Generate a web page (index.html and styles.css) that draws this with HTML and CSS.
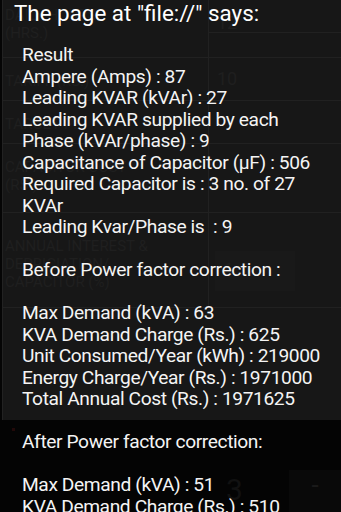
FILE: index.html
```html
<!DOCTYPE html>
<html lang="en">
<head>
  <meta charset="UTF-8">
  <title>Power Factor Correction</title>
  <link rel="stylesheet" href="styles.css">
</head>
<body>
  <div class="page">
    <div class="ghost-table">
      <div class="row row-hours">
        <div class="cell label">DAILY HOURS<br>(Hrs.)</div>
        <div class="cell value"><span>12</span></div>
      </div>
      <div class="row row-short">
        <div class="cell label">TARIFF (Rs.)</div>
        <div class="cell value"><span>10</span></div>
      </div>
      <div class="row row-short">
        <div class="cell label">TARGET PF</div>
        <div class="cell value"></div>
      </div>
      <div class="row row-cap">
        <div class="cell label">CAPACITOR COST<br>(Rs.)</div>
        <div class="cell value"></div>
      </div>
      <div class="row row-interest">
        <div class="cell label">ANNUAL INTEREST &amp;<br>DEPRICIATION/<br>CAPACITOR (%)</div>
        <div class="cell value"><span class="box">6</span></div>
      </div>
    </div>
    <div class="lower">
      <span class="dot"></span>
      <span class="digit">3</span>
      <span class="minus">-</span>
    </div>
  </div>

  <div class="dialog">
    <div class="dialog-title">The page at "file://" says:</div>
    <div class="dialog-message">Result
Ampere (Amps) : 87
Leading KVAR (kVAr) : 27
Leading KVAR supplied by each Phase (kVAr/phase) : 9
Capacitance of Capacitor (μF) : 506
Required Capacitor is : 3 no. of 27 KVAr
Leading Kvar/Phase is  : 9

Before Power factor correction :

Max Demand (kVA) : 63
KVA Demand Charge (Rs.) : 625
Unit Consumed/Year (kWh) : 219000
Energy Charge/Year (Rs.) : 1971000
Total Annual Cost (Rs.) : 1971625

After Power factor correction:

Max Demand (kVA) : 51
KVA Demand Charge (Rs.) : 510
Unit Consumed/Year (kWh) : 219000</div>
  </div>
</body>
</html>
```

FILE: styles.css
```css
html, body {
  margin: 0;
  padding: 0;
}
body {
  width: 341px;
  height: 512px;
  overflow: hidden;
  position: relative;
  background: #050505;
  font-family: Roboto, "Noto Sans", sans-serif;
  color: #f4f4f4;
}

/* the page behind the dialog, almost hidden by the dim */
.page {
  display: flex;
  flex-direction: column;
  height: 512px;
}
.ghost-table {
  height: 420px;
  background: #171717;
  border-left: 1px solid #222;
  margin-left: 2px;
  color: #1f1f1f;
  font-size: 15px;
  line-height: 18px;
  text-transform: uppercase;
}
.row {
  display: flex;
  border-bottom: 1px solid #212121;
}
.row-hours {
  height: 57px;
}
.row-short {
  height: 42px;
}
.row-cap {
  height: 68px;
}
.row-interest {
  height: 94px;
}
.cell.label {
  width: 203px;
  padding: 14px 0 0 2px;
  border-right: 1px solid #212121;
}
.row-hours .cell.label {
  padding-top: 6px;
}
.row-interest .cell.label {
  padding-top: 24px;
}
.cell.value {
  flex: 1;
  padding: 12px 0 0 8px;
  font-size: 18px;
}
.row-hours .cell.value {
  padding-top: 14px;
  border-bottom: 1px solid #212121;
  height: 18px;
}
.box {
  display: block;
  width: 80px;
  height: 40px;
  margin-top: 26px;
  margin-left: -2px;
  padding: 10px 0 0 8px;
  box-sizing: border-box;
  background: #191919;
}
.lower {
  flex: 1;
  position: relative;
  background: #040404;
}
.dot {
  position: absolute;
  left: 12px;
  top: 8px;
  width: 3px;
  height: 3px;
  background: #220909;
}
.digit {
  position: absolute;
  left: 226px;
  top: 52px;
  font-size: 30px;
  color: #111;
}
.minus {
  position: absolute;
  right: 0;
  top: 50px;
  width: 52px;
  height: 42px;
  background: #090909;
  color: #1a1a1a;
  font-size: 26px;
  text-align: center;
}

/* the alert dialog */
.dialog {
  position: absolute;
  top: 0;
  left: 0;
  right: 0;
}
.dialog-title {
  padding: 0 14px;
  font-size: 22.4px;
  line-height: 26px;
  color: #ffffff;
}
.dialog-message {
  padding: 18px 16px 0 22px;
  font-size: 19.2px;
  letter-spacing: -0.4px;
  line-height: 21.5px;
  white-space: pre-wrap;
}
```
